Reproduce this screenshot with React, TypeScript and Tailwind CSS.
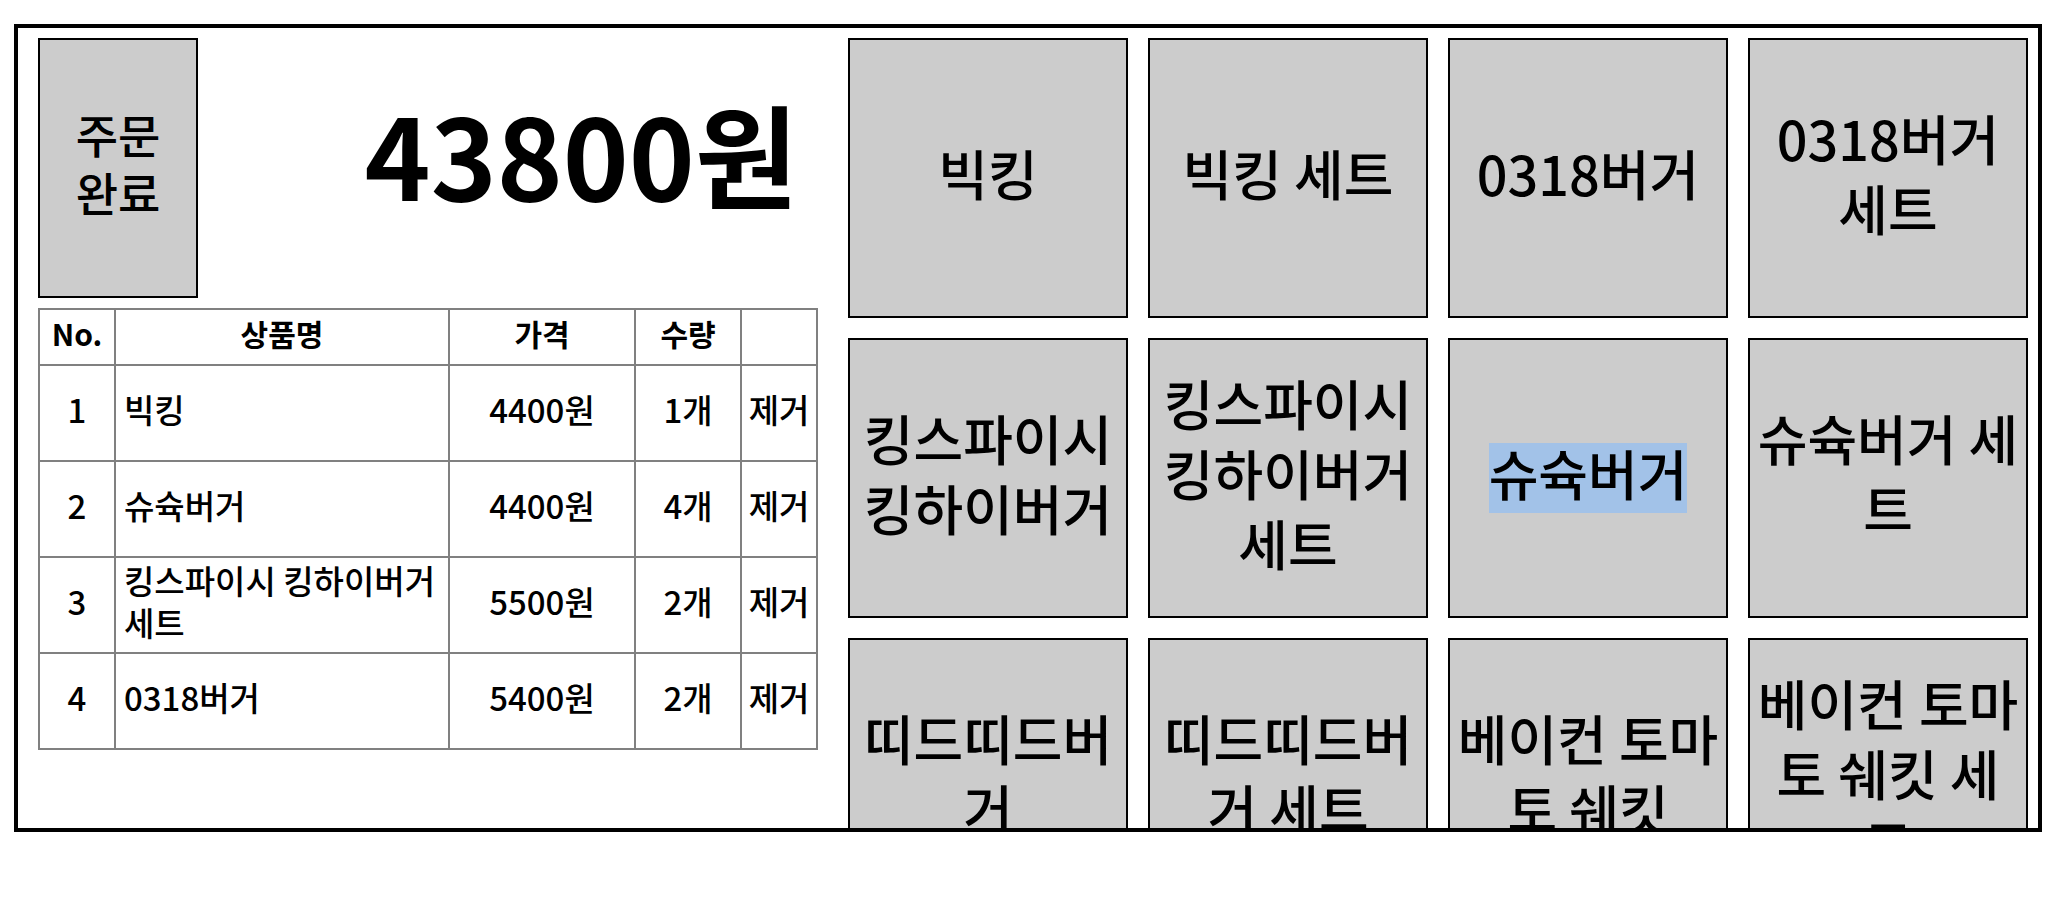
type OrderLine = { name: string; price: number; count: number };

const orders: OrderLine[] = [
  { name: "빅킹", price: 4400, count: 1 },
  { name: "슈슉버거", price: 4400, count: 4 },
  { name: "킹스파이시 킹하이버거 세트", price: 5500, count: 2 },
  { name: "0318버거", price: 5400, count: 2 },
];

const menu: string[] = [
  "빅킹",
  "빅킹 세트",
  "0318버거",
  "0318버거 세트",
  "킹스파이시 킹하이버거",
  "킹스파이시 킹하이버거 세트",
  "슈슉버거",
  "슈슉버거 세트",
  "띠드띠드버거",
  "띠드띠드버거 세트",
  "베이컨 토마토 쉐킷",
  "베이컨 토마토 쉐킷 세트",
];

const highlighted = "슈슉버거";

function OrderTable() {
  return (
    <table className="w-full table-fixed border-collapse text-[33px] leading-[42px]">
      <colgroup>
        <col className="w-[76px]" />
        <col />
        <col className="w-[186px]" />
        <col className="w-[106px]" />
        <col className="w-[76px]" />
      </colgroup>
      <thead>
        <tr className="h-14 text-[30px] leading-10">
          {["No.", "상품명", "가격", "수량", ""].map((label, i) => (
            <th key={i} className="border-2 border-[#808080] p-0 pb-2 font-bold">
              {label}
            </th>
          ))}
        </tr>
      </thead>
      <tbody>
        {orders.map((order, i) => (
          <tr key={order.name} className="h-24 text-center">
            <td className="border-2 border-[#808080] p-0 pb-2">{i + 1}</td>
            <td className="border-2 border-[#808080] py-0 pr-0 pb-2 pl-2 text-left">{order.name}</td>
            <td className="border-2 border-[#808080] p-0 pb-2">{order.price}원</td>
            <td className="border-2 border-[#808080] p-0 pb-2">{order.count}개</td>
            <td className="border-2 border-[#808080] p-0 pb-2">
              <button type="button" className="whitespace-nowrap">제거</button>
            </td>
          </tr>
        ))}
      </tbody>
    </table>
  );
}

export default function App() {
  const total = orders.reduce((sum, order) => sum + order.price * order.count, 0);

  return (
    <div className="flex h-screen bg-white pt-6 pr-[22px] pb-[70px] pl-3.5 font-['Noto_Sans_CJK_KR',sans-serif] font-medium text-black">
      <main className="flex min-w-0 flex-1 overflow-hidden border-4 border-black">
        <section className="flex w-[820px] shrink-0 flex-col gap-2.5 px-5 py-2.5">
          <header className="flex items-center justify-between">
            <button
              type="button"
              className="h-[260px] w-40 border-2 border-black bg-[#cccccc] px-6 pb-3 text-[46px] leading-[58px]"
            >
              주문 완료
            </button>
            <h1 className="pr-5 pb-8 text-[112px] leading-[140px] font-bold">{total}원</h1>
          </header>
          <OrderTable />
        </section>
        <section className="grid min-w-0 flex-1 grid-cols-4 content-start gap-5 p-2.5">
          {menu.map((item) => (
            <button
              key={item}
              type="button"
              className="flex aspect-square items-center justify-center border-2 border-black bg-[#cccccc] px-1 text-[54px]"
            >
              {item === highlighted ? (
                <mark className="bg-[#a2c2e8] pb-2.5 leading-[60px] text-black">{item}</mark>
              ) : (
                <span className="pb-2.5 leading-[70px]">{item}</span>
              )}
            </button>
          ))}
        </section>
      </main>
    </div>
  );
}
